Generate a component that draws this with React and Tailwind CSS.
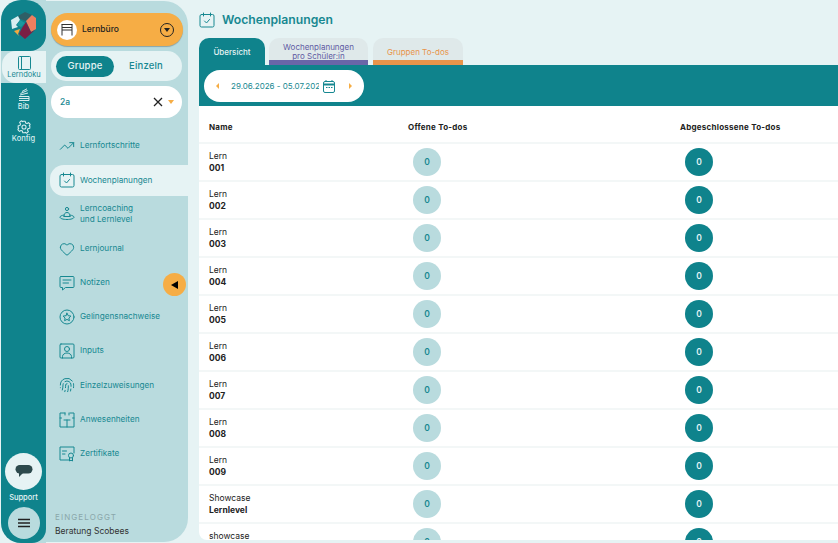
import React from "react";
import { TrendingUp, Heart, Fingerprint } from "lucide-react";

const font = { fontFamily: '"Inter", "Open Sans", sans-serif' };

const Logo = () => (
  <svg width="26" height="27" viewBox="0 0 26 27">
    <polygon points="7,4 14,0 21,3 15,9 9,7" fill="#2f5f66" />
    <polygon points="21,3 25,6 25,17 20,20 15,9" fill="#ef7f5f" />
    <polygon points="15,10 20,20 24,18 14,27 8,22 11,16" fill="#7a1f45" />
    <polygon points="0,8 7,4 9,8 5,13 7,15 1,17" fill="#d9eef0" />
    <polygon points="3,19 9,17 7,22 8,24" fill="#f4a93f" />
    <polygon points="9,8 14,11 10,15 6,13" fill="#1a98a0" />
  </svg>
);

const LernbueroIcon = () => (
  <svg width="16" height="16" viewBox="0 0 16 16" fill="none" stroke="#333" strokeWidth="1">
    <path d="M2.500 2.500h11M3 2.500v11M13 2.500v11M3 8h10M3 5.500h10" />
  </svg>
);

const strokeProps = { fill: "none", stroke: "#178891", strokeWidth: 1, strokeLinecap: "round", strokeLinejoin: "round" };

const CalendarCheckIcon = ({ size = 16, color = "#178891" }) => (
  <svg width={size} height={size} viewBox="0 0 16 16" {...strokeProps} stroke={color}>
    <rect x="1" y="2.500" width="14" height="12.500" rx="1.500" />
    <path d="M4.500 1v3M11.500 1v3M5.500 9l2 2 3-3.500" />
  </svg>
);

const CoachIcon = () => (
  <svg width="16" height="16" viewBox="0 0 16 16" {...strokeProps}>
    <circle cx="8" cy="3" r="1.600" />
    <path d="M5 10.500c0-3 1.200-4 3-4s3 1 3 4M5 9c-2.500.5-4 1.200-4 2.200C1 12.500 4 13.500 8 13.500s7-1 7-2.300c0-1-1.500-1.700-4-2.200M5 10.500h6" />
  </svg>
);

const NoteIcon = () => (
  <svg width="16" height="16" viewBox="0 0 16 16" {...strokeProps}>
    <path d="M2 1.500h12a1 1 0 0 1 1 1v9a1 1 0 0 1-1 1H6.500L3.500 15v-2.500H2a1 1 0 0 1-1-1v-9a1 1 0 0 1 1-1z" />
    <path d="M4 5h8M4 8h5.500" />
  </svg>
);

const StarBadgeIcon = () => (
  <svg width="16" height="16" viewBox="0 0 16 16" {...strokeProps}>
    <circle cx="8" cy="8" r="7" />
    <path d="M8 4.200l1.200 2.500 2.700.4-2 1.900.5 2.700L8 10.400l-2.400 1.300.5-2.700-2-1.900 2.700-.4z" />
  </svg>
);

const PersonBoxIcon = () => (
  <svg width="16" height="16" viewBox="0 0 16 16" {...strokeProps}>
    <rect x="1" y="1" width="14" height="14" rx="1" />
    <circle cx="8" cy="6" r="2.500" />
    <path d="M3.500 15v-1.500c0-2 2-3.500 4.500-3.500s4.500 1.500 4.500 3.500V15" />
  </svg>
);

const AttendanceIcon = () => (
  <svg width="16" height="16" viewBox="0 0 16 16" {...strokeProps}>
    <path d="M6 1H1v14h14V1h-4M1 6h1.500M15 6h-1.500M5 8h6M8 8v7M6 1v2M10 1v2" />
  </svg>
);

const CertificateIcon = () => (
  <svg width="16" height="16" viewBox="0 0 16 16" {...strokeProps}>
    <path d="M10 14H1V1h14v6" />
    <path d="M3.500 5h4M3.500 8h2.500" />
    <circle cx="12" cy="9.500" r="2.500" />
    <path d="M10.500 12v3l1.500-.8 1.500.8v-3" />
  </svg>
);

const BibIcon = () => (
  <svg width="14" height="14" viewBox="0 0 14 14" fill="none" stroke="#d9eef0" strokeWidth="1">
    <path d="M2 8.500h10v4H2M2 10.500h10M3 7l8-2M3.500 5.500l7-3M5 3.500L10 .8" />
  </svg>
);

const GearIcon = () => (
  <svg width="14" height="14" viewBox="0 0 24 24" fill="none" stroke="#d9eef0" strokeWidth="1.800" strokeLinejoin="round">
    <circle cx="12" cy="12" r="3.500" />
    <path d="M10 2h4l.7 3 2.500 1.100 2.600-1.600 2.800 2.800-1.600 2.600L22 10v4l-3 .7-1.100 2.500 1.600 2.600-2.800 2.800-2.600-1.600-.1 1H10l-.7-3-2.500-1.100-2.600 1.600-2.800-2.800 1.600-2.600L2 14v-4l3-.7 1.100-2.500-1.600-2.600 2.800-2.800 2.600 1.600z" />
  </svg>
);

const navItems = [
  { label: ["Lernfortschritte"], icon: <TrendingUp size={16} strokeWidth={1.500} color="#178891" /> },
  { label: ["Wochenplanungen"], icon: <CalendarCheckIcon />, active: true },
  { label: ["Lerncoaching", "und Lernlevel"], icon: <CoachIcon /> },
  { label: ["Lernjournal"], icon: <Heart size={16} strokeWidth={1.500} color="#178891" /> },
  { label: ["Notizen"], icon: <NoteIcon /> },
  { label: ["Gelingensnachweise"], icon: <StarBadgeIcon /> },
  { label: ["Inputs"], icon: <PersonBoxIcon /> },
  { label: ["Einzelzuweisungen"], icon: <Fingerprint size={16} strokeWidth={1.500} color="#178891" /> },
  { label: ["Anwesenheiten"], icon: <AttendanceIcon /> },
  { label: ["Zertifikate"], icon: <CertificateIcon /> },
];

const rows = [
  ["Lern", "001"],
  ["Lern", "002"],
  ["Lern", "003"],
  ["Lern", "004"],
  ["Lern", "005"],
  ["Lern", "006"],
  ["Lern", "007"],
  ["Lern", "008"],
  ["Lern", "009"],
  ["Showcase", "Lernlevel"],
  ["showcase", "\u00a0"],
];

const Rail = () => (
  <div className="w-[45px] shrink-0 h-full flex flex-col bg-[#b9dbde] rounded-l-[22px] ml-px">
    <div className="h-[51px] shrink-0 bg-[#0f838c] rounded-tl-[20px] rounded-br-[16px] rounded-tr-[20px] flex items-center justify-center">
      <Logo />
    </div>
    <div className="h-[32px] shrink-0 ml-px bg-[#e6f3f4] rounded-l-[14px] flex flex-col items-center justify-center">
      <svg width="13" height="14" viewBox="0 0 13 14" fill="none" stroke="#178891" strokeWidth="1">
        <rect x="0.500" y="0.500" width="12" height="13" rx="1" />
        <path d="M3.500 .5v13" />
      </svg>
      <span className="text-[7.500px] leading-[9px] text-[#178891]">Lerndoku</span>
    </div>
    <div className="flex-1 bg-[#0f838c] rounded-tr-[16px] rounded-bl-[20px] rounded-br-[14px] flex flex-col items-center pt-[5px]">
      <BibIcon />
      <span className="text-[7.500px] leading-[9px] text-[#d9eef0] font-medium">Bib</span>
      <div className="mt-[9px]">
        <GearIcon />
      </div>
      <span className="text-[7.500px] leading-[9px] text-[#d9eef0] font-medium">Konfig</span>
      <div className="mt-auto w-[37px] h-[37px] rounded-full bg-[#e6f3f4] flex items-center justify-center">
        <svg width="18" height="13" viewBox="0 0 18 13">
          <rect x="0.500" y="0" width="17" height="8.500" rx="4.200" fill="#2d4a4d" />
          <polygon points="4,8 8,8 4,12" fill="#2d4a4d" />
        </svg>
      </div>
      <span className="text-[7.500px] leading-[9px] text-[#e6f3f4] mt-[3px] font-medium">Support</span>
      <div className="w-[32px] h-[32px] rounded-full bg-[#b9dbde] flex items-center justify-center mt-[5px] mb-[4px]">
        <svg width="14" height="10" viewBox="0 0 14 10" stroke="#222" strokeWidth="1.300">
          <path d="M1 1.500h12M1 5h12M1 8.500h12" />
        </svg>
      </div>
    </div>
  </div>
);

const Panel = () => (
  <div className="relative w-[142px] shrink-0 h-[541px] mt-px bg-[#b9dbde] rounded-r-[24px] flex flex-col">
    <div className="ml-[5px] mr-[5px] mt-[12px] h-[33px] rounded-full bg-[#f6ad45] flex items-center pl-[6px] pr-[9px] shadow-[0_1px_1px_rgba(0,0,0,0.25)]">
      <div className="w-[20px] h-[20px] rounded-full bg-white flex items-center justify-center">
        <LernbueroIcon />
      </div>
      <span className="ml-[5px] text-[8.500px] font-medium text-[#222] flex-1">Lernbüro</span>
      <div className="w-[14px] h-[14px] rounded-full border border-[#222] flex items-center justify-center">
        <div className="w-0 h-0 border-l-[3px] border-r-[3px] border-t-[4px] border-l-transparent border-r-transparent border-t-[#222]" />
      </div>
    </div>
    <div className="ml-[5px] mr-[6px] mt-[5px] h-[30px] rounded-full bg-[#e6f3f4] flex items-center p-[5px] text-[9.500px] font-medium tracking-[0.2px]">
      <div className="w-[58px] h-[21px] rounded-full bg-[#0f838c] text-[#e6f3f4] flex items-center justify-center">Gruppe</div>
      <div className="flex-1 text-center text-[#178891] pl-[1px]">Einzeln</div>
    </div>
    <div className="ml-[5px] mr-[6px] mt-[5px] h-[32px] rounded-[16px] bg-white flex items-center pl-[9px] pr-[8px]">
      <span className="text-[8.500px] font-medium text-[#178891] flex-1">2a</span>
      <svg width="10" height="10" viewBox="0 0 10 10" stroke="#222" strokeWidth="1.300">
        <path d="M1 1l8 8M9 1L1 9" />
      </svg>
      <div className="ml-[5px] w-0 h-0 border-l-[3.500px] border-r-[3.500px] border-t-[4px] border-l-transparent border-r-transparent border-t-[#f6ad45]" />
    </div>
    <nav className="mt-[11px] flex flex-col">
      {navItems.map((item) => (
        <div key={item.label[0]} className="h-[34.200px] shrink-0 flex items-center ml-[4px]">
          <div
            className={`w-full h-[31px] flex items-center pl-[9px] gap-[5px] rounded-l-[14px] ${
              item.active ? "bg-[#e6f3f4]" : ""
            }`}
          >
            <span className="w-[16px] h-[16px] shrink-0 flex">{item.icon}</span>
            <span className="text-[8.200px] leading-[11.500px] text-[#178891]">
              {item.label.map((line) => (
                <span key={line} className="block">
                  {line}
                </span>
              ))}
            </span>
          </div>
        </div>
      ))}
    </nav>
    <div className="mt-auto ml-[9px] mb-[5px]">
      <div className="text-[8px] leading-[10px] tracking-[1.100px] text-[#8aa7aa]">EINGELOGGT</div>
      <div className="text-[8.500px] leading-[11px] text-[#333] mt-[4px]">Beratung Scobees</div>
    </div>
    {/* collapse toggle */}
    <button className="absolute left-[117px] top-[272px] w-[23px] h-[23px] rounded-full bg-[#f6ad45] flex items-center justify-center">
      <div className="w-0 h-0 border-t-[4px] border-b-[4px] border-r-[7px] border-t-transparent border-b-transparent border-r-black" />
    </button>
  </div>
);

const Main = () => (
  <div className="flex-1 min-w-0 h-full pl-[11px] flex flex-col">
    <div className="flex items-center h-[38px] shrink-0 gap-[7px] pt-[2px]">
      <CalendarCheckIcon size={16} />
      <h1 className="text-[12.200px] font-semibold text-[#178891]">Wochenplanungen</h1>
    </div>
    <div className="flex items-end h-[27px] shrink-0 text-[8px] leading-[8.500px] text-center">
      <div className="w-[66px] h-[27px] pt-[2px] rounded-t-[10px] bg-[#0f838c] text-[#e6f3f4] flex items-center justify-center font-medium">
        Übersicht
      </div>
      <div className="ml-[4px] w-[99px] h-[27px] pt-[5px] rounded-t-[10px] bg-[#dfe9ea] text-[#5f5ba3] border-b-[5px] border-[#6a66a8] flex items-center justify-center">
        <span>
          Wochenplanungen
          <br />
          pro Schüler:in
        </span>
      </div>
      <div className="ml-[5px] w-[90px] h-[27px] pt-[6px] rounded-t-[10px] bg-[#dfe9ea] text-[#e8944a] border-b-[5px] border-[#e8944a] flex items-center justify-center">
        Gruppen To-dos
      </div>
    </div>
    <div className="h-[41px] shrink-0 bg-[#0f838c] pl-[5px] pt-[5px]">
      <div className="w-[160px] h-[32px] rounded-full bg-white flex items-center pl-[12px]">
        <div className="w-0 h-0 border-t-[3px] border-b-[3px] border-r-[3px] border-t-transparent border-b-transparent border-r-[#f6ad45]" />
        <span className="ml-[12px] w-[88px] overflow-hidden whitespace-nowrap text-[8px] text-[#178891]">
          29.06.2026 - 05.07.2026
        </span>
        <svg className="ml-[4px]" width="12" height="13" viewBox="0 0 12 13" fill="none" stroke="#178891">
          <rect x="0.500" y="1.500" width="11" height="11" rx="1.500" />
          <path d="M0.500 4.500h11" strokeWidth="2" />
          <path d="M3 0v2M9 0v2M3 7.500h1.500M5.500 7.500H7M8 7.500h1.500" />
        </svg>
        <div className="ml-[14px] w-0 h-0 border-t-[3px] border-b-[3px] border-l-[3px] border-t-transparent border-b-transparent border-l-[#f6ad45]" />
      </div>
    </div>
    <div className="flex-1 min-h-0 mb-[3px] bg-white rounded-bl-[8px] overflow-hidden text-[#222]">
      <div className="h-[38px] grid grid-cols-[199px_272px_1fr] items-center pl-[10px] pt-[5px] text-[8px] font-bold tracking-[0.25px] border-b-2 border-[#f3f7f7]">
        <span>Name</span>
        <span>Offene To-dos</span>
        <span>Abgeschlossene To-dos</span>
      </div>
      {rows.map(([first, second]) => (
        <div
          key={first + second}
          className="h-[38px] shrink-0 grid grid-cols-[199px_272px_1fr] items-center pl-[10px] border-b-2 border-[#f3f7f7]"
        >
          <div className="text-[8.500px] leading-[12px]">
            <div>{first}</div>
            <div className="font-bold">{second}</div>
          </div>
          <div className="pl-[5px]">
            <div className="w-[28px] h-[28px] rounded-full bg-[#b9dbde] text-[#178891] text-[8.500px] font-semibold flex items-center justify-center">
              0
            </div>
          </div>
          <div className="pl-[5px]">
            <div className="w-[28px] h-[28px] rounded-full bg-[#0f838c] text-[#e6f3f4] text-[8.500px] font-semibold flex items-center justify-center">
              0
            </div>
          </div>
        </div>
      ))}
    </div>
  </div>
);

export default function App() {
  return (
    <div className="w-[838px] h-[543px] overflow-hidden flex bg-[#e6f3f4]" style={font}>
      <Rail />
      <Panel />
      <Main />
    </div>
  );
}
